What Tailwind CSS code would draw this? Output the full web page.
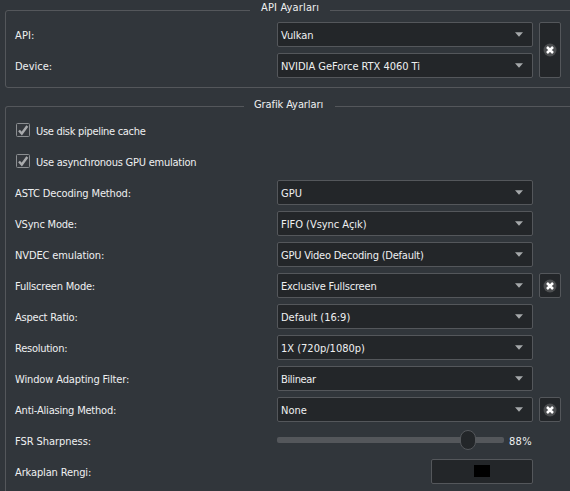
<!DOCTYPE html>
<html lang="tr"><head><meta charset="utf-8"><title>Grafik Ayarları</title>
<script src="https://cdn.jsdelivr.net/npm/@tailwindcss/browser@4"></script></head>
<body class="w-[570px] h-[491px] overflow-hidden bg-[#31363b] text-[#eff0f1] font-['DejaVu_Sans_Condensed','DejaVu_Sans',sans-serif] [font-stretch:condensed] text-[11px] leading-[14px] whitespace-nowrap">
<svg class="hidden">
<symbol id="down" viewBox="0 0 8 5"><path d="M0 .3h8L4 4.7z" fill="#a5a8aa"/></symbol>
<symbol id="reset" viewBox="0 0 14 14"><circle cx="7" cy="7" r="6.5" fill="#4b4d4f"/><path d="M4 4l6 6M10 4l-6 6" stroke="#fff" stroke-width="2.5"/></symbol>
<symbol id="check" viewBox="0 0 14 14"><rect x=".5" y=".5" width="13" height="13" rx="1" fill="#34383d" stroke="#8b8e91"/><path d="M3 7.5l2.8 3L11.3 3" fill="none" stroke="#a9abad" stroke-width="2.4"/></symbol>
</svg>
<main class="flex flex-col pl-[5px] w-[570px] h-[491px] overflow-hidden">
<div class="h-[88px] w-[580px] flex flex-col shrink-0">
<div class="relative z-10 h-[10px] flex items-start"><h2 class="ml-[256px]"><span class="block mt-px tracking-[0.15px]">API Ayarları</span></h2></div>
<section class="relative h-[78px] flex border border-[#54575b] rounded-[3px] pl-[9px] pt-[11px]">
<div class="absolute -top-px left-[244px] w-[80px] h-px bg-[#31363b]"></div>
<div class="flex flex-col gap-[6px]">
<div class="flex items-center h-[25px]"><label class="w-[262px]"><span class="block mt-[2px] tracking-[0.15px]">API:</span></label><div class="w-[256px] h-[25px] flex items-center justify-between pl-[3px] pr-[9.5px] border border-[#54575b] rounded-[2px] bg-[#232629]"><span class="mt-[2px] tracking-[-0.1px]">Vulkan</span><svg class="w-2 h-[5px] -mt-px"><use href="#down"/></svg></div></div>
<div class="flex items-center h-[25px]"><label class="w-[262px]"><span class="block mt-[2px]">Device:</span></label><div class="w-[256px] h-[25px] flex items-center justify-between pl-[3px] pr-[9.5px] border border-[#54575b] rounded-[2px] bg-[#232629]"><span class="mt-[2px] tracking-[-0.04px]">NVIDIA GeForce RTX 4060 Ti</span><svg class="w-2 h-[5px] -mt-px"><use href="#down"/></svg></div></div>
</div>
<button class="ml-[6px] w-[22px] h-[56px] flex items-center justify-center border border-[#54575b] rounded-[2px] bg-[#232629]"><svg class="w-[14px] h-[14px]"><use href="#reset"/></svg></button>
</section>
</div>
<section class="relative mt-[18px] w-[580px] h-[385px] shrink-0 border border-b-0 border-[#54575b] rounded-t-[3px] pl-[9px] pt-[11px] flex flex-col gap-[6px]">
<h2 class="absolute -top-[9px] left-[238px] w-[91px] h-[14px] pl-[10px] bg-[#31363b]"><span class="tracking-[-0.1px]">Grafik Ayarları</span></h2>
<div class="flex items-center h-[25px] pl-px gap-[6px]"><svg class="w-[14px] h-[14px] -mt-px"><use href="#check"/></svg><span class="mt-[2px] tracking-[-0.3px]">Use disk pipeline cache</span></div>
<div class="flex items-center h-[25px] pl-px gap-[6px]"><svg class="w-[14px] h-[14px] -mt-px"><use href="#check"/></svg><span class="mt-[2px] tracking-[-0.23px]">Use asynchronous GPU emulation</span></div>
<div class="flex items-center h-[25px]"><label class="w-[262px]"><span class="block mt-[2px] tracking-[-0.14px]">ASTC Decoding Method:</span></label><div class="w-[256px] h-[25px] flex items-center justify-between pl-[3px] pr-[9.5px] border border-[#54575b] rounded-[2px] bg-[#232629]"><span class="mt-[2px]">GPU</span><svg class="w-2 h-[5px] -mt-px"><use href="#down"/></svg></div></div>
<div class="flex items-center h-[25px]"><label class="w-[262px]"><span class="block mt-[2px] tracking-[-0.2px]">VSync Mode:</span></label><div class="w-[256px] h-[25px] flex items-center justify-between pl-[3px] pr-[9.5px] border border-[#54575b] rounded-[2px] bg-[#232629]"><span class="mt-[2px] tracking-[-0.03px]">FIFO (Vsync Açık)</span><svg class="w-2 h-[5px] -mt-px"><use href="#down"/></svg></div></div>
<div class="flex items-center h-[25px]"><label class="w-[262px]"><span class="block mt-[2px] tracking-[-0.13px]">NVDEC emulation:</span></label><div class="w-[256px] h-[25px] flex items-center justify-between pl-[3px] pr-[9.5px] border border-[#54575b] rounded-[2px] bg-[#232629]"><span class="mt-[2px] tracking-[-0.22px]">GPU Video Decoding (Default)</span><svg class="w-2 h-[5px] -mt-px"><use href="#down"/></svg></div></div>
<div class="flex items-center h-[25px]"><label class="w-[262px]"><span class="block mt-[2px] tracking-[-0.2px]">Fullscreen Mode:</span></label><div class="w-[256px] h-[25px] flex items-center justify-between pl-[3px] pr-[9.5px] border border-[#54575b] rounded-[2px] bg-[#232629]"><span class="mt-[2px] tracking-[-0.18px]">Exclusive Fullscreen</span><svg class="w-2 h-[5px] -mt-px"><use href="#down"/></svg></div><button class="ml-[6px] w-[22px] h-[25px] flex items-center justify-center border border-[#54575b] rounded-[2px] bg-[#232629]"><svg class="w-[14px] h-[14px]"><use href="#reset"/></svg></button></div>
<div class="flex items-center h-[25px]"><label class="w-[262px]"><span class="block mt-[2px] tracking-[-0.23px]">Aspect Ratio:</span></label><div class="w-[256px] h-[25px] flex items-center justify-between pl-[3px] pr-[9.5px] border border-[#54575b] rounded-[2px] bg-[#232629]"><span class="mt-[2px]">Default (16:9)</span><svg class="w-2 h-[5px] -mt-px"><use href="#down"/></svg></div></div>
<div class="flex items-center h-[25px]"><label class="w-[262px]"><span class="block mt-[2px] tracking-[-0.25px]">Resolution:</span></label><div class="w-[256px] h-[25px] flex items-center justify-between pl-[3px] pr-[9.5px] border border-[#54575b] rounded-[2px] bg-[#232629]"><span class="mt-[2px]">1X (720p/1080p)</span><svg class="w-2 h-[5px] -mt-px"><use href="#down"/></svg></div></div>
<div class="flex items-center h-[25px]"><label class="w-[262px]"><span class="block mt-[2px] tracking-[-0.13px]">Window Adapting Filter:</span></label><div class="w-[256px] h-[25px] flex items-center justify-between pl-[3px] pr-[9.5px] border border-[#54575b] rounded-[2px] bg-[#232629]"><span class="mt-[2px] tracking-[-0.35px]">Bilinear</span><svg class="w-2 h-[5px] -mt-px"><use href="#down"/></svg></div></div>
<div class="flex items-center h-[25px]"><label class="w-[262px]"><span class="block mt-[2px] tracking-[-0.2px]">Anti-Aliasing Method:</span></label><div class="w-[256px] h-[25px] flex items-center justify-between pl-[3px] pr-[9.5px] border border-[#54575b] rounded-[2px] bg-[#232629]"><span class="mt-[2px]">None</span><svg class="w-2 h-[5px] -mt-px"><use href="#down"/></svg></div><button class="ml-[6px] w-[22px] h-[25px] flex items-center justify-center border border-[#54575b] rounded-[2px] bg-[#232629]"><svg class="w-[14px] h-[14px]"><use href="#reset"/></svg></button></div>
<div class="flex items-center h-[25px]"><label class="w-[262px]"><span class="block mt-[2px] tracking-[-0.05px]">FSR Sharpness:</span></label><div class="relative w-[227px] h-[6px] -mt-px rounded-[2px] bg-[#54575b]"><div class="absolute left-[183px] -top-[7px] w-[16px] h-[20px] rounded-[8px] border border-[#54575b] bg-[#232629]"></div></div><span class="ml-[5px] mt-[2px] tracking-[0.3px]">88%</span></div>
<div class="flex items-center h-[25px]"><label class="w-[416px]"><span class="block mt-[2px] tracking-[-0.13px]">Arkaplan Rengi:</span></label><button class="w-[102px] h-[25px] flex items-center justify-center border border-[#54575b] rounded-[2px] bg-[#232629]"><span class="w-[16px] h-[12px] -mt-px bg-black"></span></button></div>
</section>
</main>
</body></html>
